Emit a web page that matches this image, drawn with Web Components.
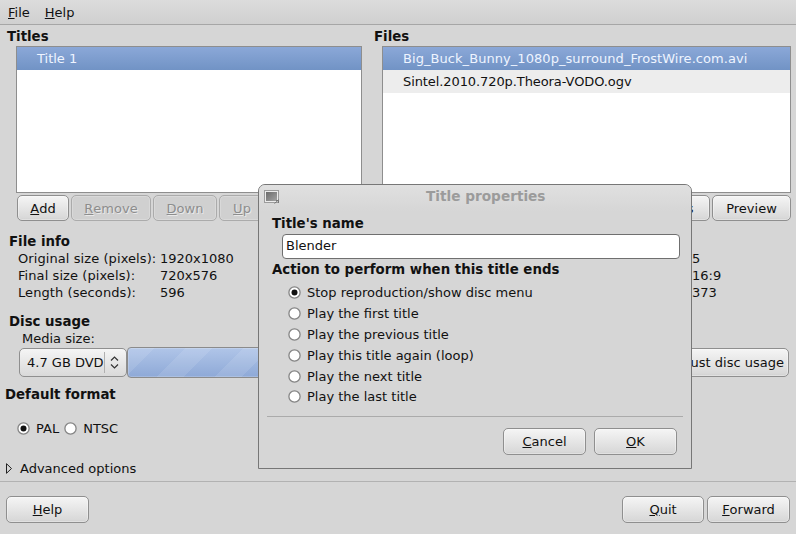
<!DOCTYPE html>
<html>
<head>
<meta charset="utf-8">
<title>Title properties</title>
<style>
  html, body { margin: 0; padding: 0; background: #d6d6d6; }
  body { font: 13px/17px "DejaVu Sans", sans-serif; color: #111; }
</style>
</head>
<body>
<app-window>
  <menu-bar>
    <span><u>F</u>ile</span>
    <span><u>H</u>elp</span>
  </menu-bar>

  <list-pair>
    <list-panel slot="left" heading="Titles">
      <list-row slot="rows" selected indent="20">Title 1</list-row>
      <gtk-button slot="buttons" w="52"><u>A</u>dd</gtk-button>
      <gtk-button slot="buttons" w="80" disabled><u>R</u>emove</gtk-button>
      <gtk-button slot="buttons" w="64" disabled><u>D</u>own</gtk-button>
      <gtk-button slot="buttons" w="46" disabled><u>U</u>p</gtk-button>
    </list-panel>
    <list-panel slot="right" heading="Files" side="end">
      <list-row slot="rows" selected indent="20" spacing=".06">Big_Buck_Bunny_1080p_surround_FrostWire.com.avi</list-row>
      <list-row slot="rows" alt indent="20" spacing="-.09">Sintel.2010.720p.Theora-VODO.ogv</list-row>
      <gtk-button slot="buttons" w="90">Subtitles</gtk-button>
      <gtk-button slot="buttons" w="79">Preview</gtk-button>
    </list-panel>
  </list-pair>

  <file-info>
    <info-row label="Original size (pixels):" value="1920x1080" other="5"></info-row>
    <info-row label="Final size (pixels):" value="720x576" other="16:9"></info-row>
    <info-row label="Length (seconds):" value="596" other="373"></info-row>
  </file-info>

  <disc-usage></disc-usage>

  <format-box></format-box>

  <expander-row>Advanced options</expander-row>

  <foot-bar>
    <gtk-button w="83" h="27"><u>H</u>elp</gtk-button>
    <gtk-button slot="end" w="82" h="27"><u>Q</u>uit</gtk-button>
    <gtk-button slot="end" w="83" h="27"><u>F</u>orward</gtk-button>
  </foot-bar>

  <title-dialog>
    <sec-head>Title's name</sec-head>
    <text-entry value="Blender"></text-entry>
    <sec-head second>Action to perform when this title ends</sec-head>
    <radio-list>
      <gtk-radio checked>Stop reproduction/show disc menu</gtk-radio>
      <gtk-radio>Play the first title</gtk-radio>
      <gtk-radio>Play the previous title</gtk-radio>
      <gtk-radio>Play this title again (loop)</gtk-radio>
      <gtk-radio>Play the next title</gtk-radio>
      <gtk-radio>Play the last title</gtk-radio>
    </radio-list>
    <gtk-button slot="actions" w="83" h="27"><u>C</u>ancel</gtk-button>
    <gtk-button slot="actions" w="83" h="27"><u>O</u>K</gtk-button>
  </title-dialog>
</app-window>

<script>
function shadow(el, html) {
  el.attachShadow({ mode: 'open' }).innerHTML = html;
}

class AppWindow extends HTMLElement {
  connectedCallback() {
    shadow(this, `<style>
      :host { display: flex; flex-direction: column; position: relative; width: 796px; height: 534px; overflow: hidden; background: #d6d6d6; }
    </style><slot></slot>`);
  }
}

class MenuBar extends HTMLElement {
  connectedCallback() {
    shadow(this, `<style>
      :host { display: flex; gap: 15px; height: 24px; padding-left: 8px; align-items: center; box-sizing: content-box;
        background: linear-gradient(#dcdcdc, #d0d0d0); border-bottom: 1px solid #a6a6a6; }
    </style><slot></slot>`);
  }
}

class ListPair extends HTMLElement {
  connectedCallback() {
    shadow(this, `<style>
      :host { display: grid; grid-template-columns: 355px 417px; column-gap: 12px; padding-left: 7px; }
    </style><slot name="left"></slot><slot name="right"></slot>`);
  }
}

class ListPanel extends HTMLElement {
  connectedCallback() {
    const end = this.getAttribute('side') === 'end';
    shadow(this, `<style>
      :host { display: block; }
      .head { height: 21px; line-height: 24px; font-weight: bold; font-size: 13.33px; }
      .list { height: 145px; margin-left: ${end ? 8 : 9}px; background: #fff; border: 1px solid #8e8e8e; }
      .btns { display: flex; gap: 2px; margin: 2px 0 0 ${end ? 8 : 10}px; justify-content: ${end ? 'flex-end' : 'flex-start'}; }
    </style>
    <div class="head">${this.getAttribute('heading')}</div>
    <div class="list"><slot name="rows"></slot></div>
    <div class="btns"><slot name="buttons"></slot></div>`);
  }
}

class ListRow extends HTMLElement {
  connectedCallback() {
    const spacing = this.getAttribute('spacing') || 0;
    shadow(this, `<style>
      :host { display: block; height: 23px; line-height: 23px; white-space: nowrap; padding-left: ${this.getAttribute('indent')}px; color: #111; letter-spacing: ${spacing}px; }
      :host([selected]) { background: linear-gradient(#8ba8d8, #7193c5); color: #eef4ff; }
      :host([alt]) { background: #ededed; }
    </style><slot></slot>`);
  }
}

class GtkButton extends HTMLElement {
  connectedCallback() {
    const w = this.getAttribute('w'), h = this.getAttribute('h') || 26;
    shadow(this, `<style>
      :host { display: inline-flex; box-sizing: border-box; width: ${w}px; height: ${h}px; flex: none; align-items: center; justify-content: center;
        border: 1px solid #8f8f8f; border-radius: 5px; background: linear-gradient(#f5f5f5, #d9d9d9 90%, #cfcfcf); box-shadow: inset 0 0 0 1px rgba(255,255,255,.35); color: #111; white-space: nowrap; }
      :host([disabled]) { background: #d0d0d0; border-color: #ababab; color: #8d8d8d; text-shadow: 1px 1px 0 #e9e9e9; box-shadow: inset 0 0 0 1px rgba(255,255,255,.2); }
    </style><slot></slot>`);
  }
}

class FileInfo extends HTMLElement {
  connectedCallback() {
    shadow(this, `<style>
      :host { display: block; margin: 12px 0 0 9px; }
      .h { font-weight: bold; font-size: 13.33px; }
      .rows { padding-left: 9px; }
    </style><div class="h">File info</div><div class="rows"><slot></slot></div>`);
  }
}

class InfoRow extends HTMLElement {
  connectedCallback() {
    shadow(this, `<style>
      :host { display: grid; grid-template-columns: 142px 532px auto; white-space: nowrap; }
      .k { letter-spacing: .08px; }
    </style><span class="k">${this.getAttribute('label')}</span><span>${this.getAttribute('value')}</span><span>${this.getAttribute('other')}</span>`);
  }
}

class DiscUsage extends HTMLElement {
  connectedCallback() {
    shadow(this, `<style>
      :host { display: block; margin: 12px 0 0 9px; }
      .h { font-weight: bold; font-size: 13.33px; }
      .l { padding-left: 13px; height: 17px; }
      .row { display: flex; align-items: center; height: 31px; padding-left: 10px; }
      .combo { box-sizing: border-box; width: 108px; height: 29px; display: flex; align-items: center; padding-left: 7px; border: 1px solid #8f8f8f; border-radius: 5px;
        background: linear-gradient(#f5f5f5, #d9d9d9); white-space: nowrap; }
      .sep { width: 1px; height: 21px; background: #b0b0b0; margin: 0 5px 0 auto; }
      svg { display: block; margin-right: 7px; }
      .bar { box-sizing: border-box; width: 563px; height: 31px; border: 1px solid #8b8b8b; border-radius: 4px;
        box-shadow: inset 0 0 0 1px rgba(255,255,255,.18);
        background: repeating-linear-gradient(135deg, rgba(255,255,255,.1) 0 19px, rgba(255,255,255,0) 19px 41px), linear-gradient(#b0c5e8, #8ea9d7); }
      .adj { display: flex; flex: 1; justify-content: flex-end; padding-right: 7px; }
    </style>
    <div class="h">Disc usage</div>
    <div class="l">Media size:</div>
    <div class="row">
      <div class="combo">4.7 GB DVD<i class="sep"></i>
        <svg width="9" height="15" viewBox="0 0 9 15" fill="none" stroke="#333" stroke-width="1.2"><path d="M1 5.5 4.5 2 8 5.5M1 9.5 4.5 13 8 9.5"/></svg>
      </div>
      <div class="bar"></div>
      <div class="adj"><gtk-button w="124" h="29">Adjust disc usage</gtk-button></div>
    </div>`);
  }
}

class FormatBox extends HTMLElement {
  connectedCallback() {
    shadow(this, `<style>
      :host { display: block; margin: 8px 0 0 5px; }
      .h { font-weight: bold; font-size: 13.33px; }
      .row { display: flex; margin: 17px 0 0 12px; gap: 5px; }
    </style>
    <div class="h">Default format</div>
    <div class="row"><gtk-radio checked>PAL</gtk-radio><gtk-radio>NTSC</gtk-radio></div>`);
  }
}

class ExpanderRow extends HTMLElement {
  connectedCallback() {
    shadow(this, `<style>
      :host { display: flex; align-items: center; height: 17px; margin: 23px 0 0 6px; gap: 8px; }
      svg { display: block; flex: none; }
    </style>
    <svg width="6" height="11" viewBox="0 0 6 11"><path d="M.5.7 5.5 5.5.5 10.3Z" fill="#d6d6d6" stroke="#222"/></svg><slot></slot>`);
  }
}

class FootBar extends HTMLElement {
  connectedCallback() {
    shadow(this, `<style>
      :host { display: flex; justify-content: space-between; margin-top: 4px; padding: 14px 6px 0; border-top: 1px solid #b2b2b2; }
      .end { display: flex; gap: 3px; }
    </style><slot></slot><div class="end"><slot name="end"></slot></div>`);
  }
}

class GtkRadio extends HTMLElement {
  connectedCallback() {
    const on = this.hasAttribute('checked');
    shadow(this, `<style>
      :host { display: flex; align-items: center; gap: 6px; white-space: nowrap; }
      svg { display: block; flex: none; }
    </style>
    <svg width="13" height="13" viewBox="0 0 13 13">
      <circle cx="6.5" cy="6.5" r="5.6" fill="#fff" stroke="#858585" stroke-width="1.3"/>
      ${on ? '<circle cx="6.5" cy="6.5" r="3" fill="#111"/>' : ''}
    </svg><slot></slot>`);
  }
}

class SecHead extends HTMLElement {
  connectedCallback() {
    shadow(this, `<style>
      :host { display: block; font-weight: bold; font-size: 13.33px; }
      :host([second]) { margin-top: 2px; }
    </style><slot></slot>`);
  }
}

class TextEntry extends HTMLElement {
  connectedCallback() {
    shadow(this, `<style>
      :host { display: block; box-sizing: border-box; height: 25px; margin: 2px 3px 0 10px; padding-left: 3px; line-height: 22px; background: #fff; border: 1px solid #6f6f6f; border-radius: 4px; }
    </style>${this.getAttribute('value')}`);
  }
}

class RadioList extends HTMLElement {
  connectedCallback() {
    shadow(this, `<style>
      :host { display: flex; flex-direction: column; row-gap: 3.9px; margin: 6px 0 0 16px; }
    </style><slot></slot>`);
  }
}

class TitleDialog extends HTMLElement {
  connectedCallback() {
    shadow(this, `<style>
      :host { position: absolute; left: 258px; top: 184px; box-sizing: border-box; width: 434px; height: 285px; display: flex; flex-direction: column;
        background: #d6d6d6; border: 1px solid #777; border-radius: 7px 7px 0 0; }
      .bar { flex: none; position: relative; height: 26px; line-height: 23px; padding-left: 167px;
        background: linear-gradient(#e0e0e0, #d6d6d6); border-radius: 6px 6px 0 0; font-weight: bold; font-size: 13.67px; color: #9b9b9b; }
      .bar svg { position: absolute; left: 5px; top: 5px; display: block; }
      .body { flex: 1; display: flex; flex-direction: column; padding: 4px 8px 0 13px; }
      .sep { margin: 11px 0 0 -5px; height: 1px; background: #ababab; flex: none; }
      .acts { display: flex; justify-content: flex-end; gap: 8px; margin: 11px 6px 0 0; }
    </style>
    <div class="bar">
      <svg width="16" height="14" viewBox="0 0 16 14">
        <defs><linearGradient id="ic" x1="0" y1="0" x2="1" y2="1"><stop offset="0" stop-color="#6b6b6b"/><stop offset="1" stop-color="#a4a4a4"/></linearGradient></defs>
        <rect x=".5" y=".5" width="14" height="12" fill="#ececec" stroke="#9c9c9c"/>
        <rect x="2" y="2" width="11" height="9" fill="url(#ic)"/>
        <path d="M10.5 13.5 15 9.5M12 10.5h2.5v2.5" fill="none" stroke="#777"/>
      </svg>
      Title properties
    </div>
    <div class="body">
      <slot></slot>
      <div class="sep"></div>
      <div class="acts"><slot name="actions"></slot></div>
    </div>`);
  }
}

customElements.define('app-window', AppWindow);
customElements.define('menu-bar', MenuBar);
customElements.define('list-pair', ListPair);
customElements.define('list-panel', ListPanel);
customElements.define('list-row', ListRow);
customElements.define('gtk-button', GtkButton);
customElements.define('file-info', FileInfo);
customElements.define('info-row', InfoRow);
customElements.define('disc-usage', DiscUsage);
customElements.define('format-box', FormatBox);
customElements.define('expander-row', ExpanderRow);
customElements.define('foot-bar', FootBar);
customElements.define('gtk-radio', GtkRadio);
customElements.define('sec-head', SecHead);
customElements.define('text-entry', TextEntry);
customElements.define('radio-list', RadioList);
customElements.define('title-dialog', TitleDialog);
</script>
</body>
</html>
